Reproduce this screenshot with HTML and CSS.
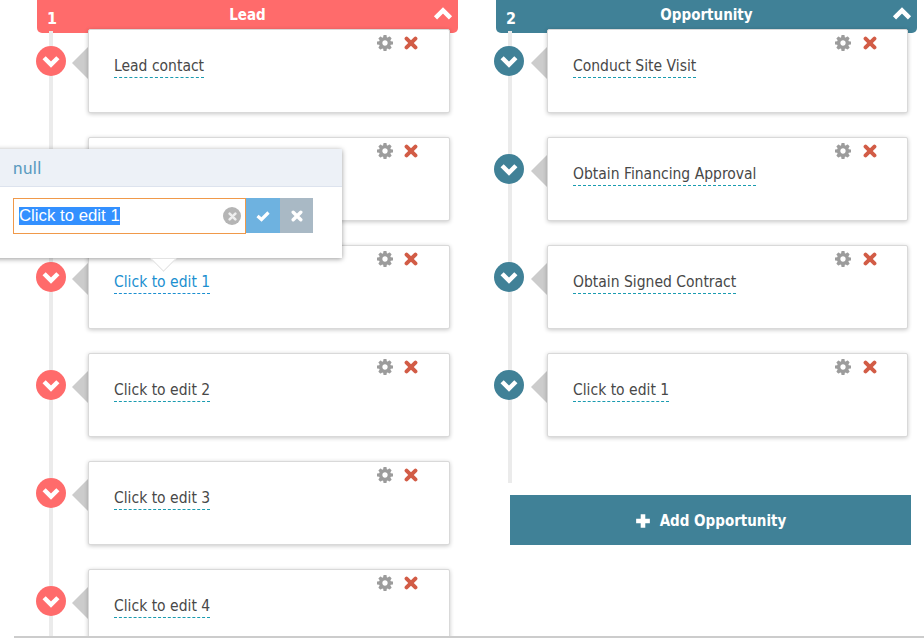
FILE: index.html
```html
<!DOCTYPE html>
<html lang="en">
<head>
<meta charset="utf-8">
<title>Stages</title>
<link rel="stylesheet" href="styles.css">
</head>
<body>
<svg class="defs" width="0" height="0" aria-hidden="true">
  <symbol id="gear" viewBox="0 -128 1536 1536"><path d="M1024 640q0-106-75-181t-181-75-181 75-75 181 75 181 181 75 181-75 75-181zm512-109v222q0 12-8 23t-20 13l-185 28q-19 54-39 91 35 50 107 138 10 12 10 25t-9 23q-27 37-99 108t-94 71q-12 0-26-9l-138-108q-44 23-91 38-16 136-29 186-7 28-36 28h-222q-14 0-24.5-8.5t-11.5-21.5l-28-184q-49-16-90-37l-141 107q-10 9-25 9-14 0-25-11-126-114-165-168-7-10-7-23 0-12 8-23 15-21 51-66.5t54-70.5q-27-50-41-99l-183-27q-13-2-21-12.5t-8-23.5v-222q0-12 8-23t19-13l186-28q14-46 39-92-40-57-107-138-10-12-10-24 0-10 9-23 26-36 98.5-107.5t94.5-71.5q13 0 26 10l138 107q44-23 91-38 16-136 29-186 7-28 36-28h222q14 0 24.5 8.5t11.5 21.5l28 184q49 16 90 37l142-107q9-9 24-9 13 0 25 10 129 119 165 170 7 8 7 22 0 12-8 23-15 21-51 66.5t-54 70.5q26 50 41 98l183 28q13 2 21 12.5t8 23.5z"/></symbol>
  <symbol id="cross" viewBox="0 0 12 12"><path d="M2.2 2.2 9.8 9.8M9.8 2.2 2.2 9.8" fill="none" stroke="currentColor" stroke-width="3.4" stroke-linecap="round"/></symbol>
  <symbol id="down" viewBox="0 0 16 12"><path d="M2.5 3 8 8.5 13.500 3" fill="none" stroke="currentColor" stroke-width="3.600"/></symbol>
  <symbol id="up" viewBox="0 0 16 12"><path d="M2 9.500 8 3.500 14 9.500" fill="none" stroke="currentColor" stroke-width="3.600"/></symbol>
  <symbol id="check" viewBox="0 0 14 12"><path d="M1.500 6 5.500 9.500 12.500 2.500" fill="none" stroke="currentColor" stroke-width="3.200"/></symbol>
  <symbol id="plus" viewBox="0 0 14 14"><path d="M7 1V13M1 7H13" fill="none" stroke="currentColor" stroke-width="4"/></symbol>
</svg>

<main class="board">
  <section class="stage stage-lead">
    <header class="stage-head">
      <span class="stage-num">1</span>
      <span class="stage-title">Lead</span>
      <svg class="stage-toggle"><use href="#up"/></svg>
    </header>
    <ol class="steps">
      <li class="step">
        <span class="dot"><svg><use href="#down"/></svg></span>
        <div class="card"><a class="label">Lead contact</a>
          <div class="tools"><svg class="gear"><use href="#gear"/></svg><svg class="cross"><use href="#cross"/></svg></div></div>
      </li>
      <li class="step">
        <span class="dot"><svg><use href="#down"/></svg></span>
        <div class="card"><a class="label">Click to edit</a>
          <div class="tools"><svg class="gear"><use href="#gear"/></svg><svg class="cross"><use href="#cross"/></svg></div></div>
      </li>
      <li class="step">
        <span class="dot"><svg><use href="#down"/></svg></span>
        <div class="card"><a class="label label-active">Click to edit 1</a>
          <div class="tools"><svg class="gear"><use href="#gear"/></svg><svg class="cross"><use href="#cross"/></svg></div></div>
      </li>
      <li class="step">
        <span class="dot"><svg><use href="#down"/></svg></span>
        <div class="card"><a class="label">Click to edit 2</a>
          <div class="tools"><svg class="gear"><use href="#gear"/></svg><svg class="cross"><use href="#cross"/></svg></div></div>
      </li>
      <li class="step">
        <span class="dot"><svg><use href="#down"/></svg></span>
        <div class="card"><a class="label">Click to edit 3</a>
          <div class="tools"><svg class="gear"><use href="#gear"/></svg><svg class="cross"><use href="#cross"/></svg></div></div>
      </li>
      <li class="step">
        <span class="dot"><svg><use href="#down"/></svg></span>
        <div class="card"><a class="label">Click to edit 4</a>
          <div class="tools"><svg class="gear"><use href="#gear"/></svg><svg class="cross"><use href="#cross"/></svg></div></div>
      </li>
    </ol>
  </section>

  <section class="stage stage-opp">
    <header class="stage-head">
      <span class="stage-num">2</span>
      <span class="stage-title">Opportunity</span>
      <svg class="stage-toggle"><use href="#up"/></svg>
    </header>
    <ol class="steps">
      <li class="step">
        <span class="dot"><svg><use href="#down"/></svg></span>
        <div class="card"><a class="label">Conduct Site Visit</a>
          <div class="tools"><svg class="gear"><use href="#gear"/></svg><svg class="cross"><use href="#cross"/></svg></div></div>
      </li>
      <li class="step">
        <span class="dot"><svg><use href="#down"/></svg></span>
        <div class="card"><a class="label">Obtain Financing Approval</a>
          <div class="tools"><svg class="gear"><use href="#gear"/></svg><svg class="cross"><use href="#cross"/></svg></div></div>
      </li>
      <li class="step">
        <span class="dot"><svg><use href="#down"/></svg></span>
        <div class="card"><a class="label">Obtain Signed Contract</a>
          <div class="tools"><svg class="gear"><use href="#gear"/></svg><svg class="cross"><use href="#cross"/></svg></div></div>
      </li>
      <li class="step">
        <span class="dot"><svg><use href="#down"/></svg></span>
        <div class="card"><a class="label">Click to edit 1</a>
          <div class="tools"><svg class="gear"><use href="#gear"/></svg><svg class="cross"><use href="#cross"/></svg></div></div>
      </li>
    </ol>
    <button class="add-btn" type="button"><svg><use href="#plus"/></svg>Add Opportunity</button>
  </section>
</main>

<div class="popover">
  <div class="pop-title">null</div>
  <div class="pop-body">
    <div class="pop-input"><span class="selected">Click to edit 1</span><span class="clear"><svg><use href="#cross"/></svg></span></div>
    <button class="pop-btn pop-ok" type="button"><svg><use href="#check"/></svg></button>
    <button class="pop-btn pop-cancel" type="button"><svg><use href="#cross"/></svg></button>
  </div>
</div>

<div class="page-edge"></div>
</body>
</html>
```
FILE: styles.css
```css
* { box-sizing: border-box; }
html, body { margin: 0; height: 638px; overflow: hidden; background: #fff; }
body { position: relative; font-family: "DejaVu Sans", "Noto Sans", sans-serif; color: #444; }
.defs { position: absolute; }

.board { display: flex; gap: 38px; padding-left: 37px; }
.stage { width: 421px; flex: none; }
.stage-lead { --accent: #ff6b6b; }
.stage-opp { --accent: #408197; }

.stage-head {
  position: relative;
  height: 33px;
  background: var(--accent);
  border-radius: 0 0 5px 5px;
  color: #fff;
  font: bold 15px/30px "DejaVu Sans Condensed", "DejaVu Sans", sans-serif;
  font-stretch: condensed;
  text-align: center;
}
.stage-num { position: absolute; left: 10px; top: 4px; font-size: 16px; line-height: 29px; }
.stage-toggle { position: absolute; right: 5px; top: 6px; width: 20px; height: 15px; }

.steps {
  position: relative;
  list-style: none;
  margin: -4px 0 0;
  padding: 0;
  display: flex;
  flex-direction: column;
  gap: 24px;
}
.steps::before {
  content: "";
  position: absolute;
  left: 12px;
  top: 2px;
  bottom: -100px;
  width: 4px;
  background: #ebebeb;
}
.stage-opp .steps::before { bottom: -46px; }

.step { position: relative; display: flex; align-items: flex-start; padding-left: 51px; }
.step::before {
  content: "";
  position: absolute;
  left: 35px;
  top: 17px;
  border: solid transparent;
  border-width: 17px 17px 17px 0;
  border-right-color: #ccc;
}
.dot {
  position: absolute;
  left: -1px;
  top: 17px;
  width: 30px;
  height: 30px;
  border-radius: 50%;
  background: var(--accent);
  color: #fff;
  display: flex;
  align-items: center;
  justify-content: center;
}
.stage-opp .dot { left: -2px; }
.dot svg { width: 20px; height: 15px; }

.card {
  position: relative;
  width: 362px;
  height: 84px;
  background: #fff;
  border: 1px solid #d9d9d9;
  border-radius: 2px;
  box-shadow: 0 1px 4px rgba(0, 0, 0, .22);
  padding: 24px 25px 0;
}
.stage-opp .card { width: 361px; }
.label {
  display: inline-block;
  height: 24px;
  font-family: "DejaVu Sans Condensed", "DejaVu Sans", sans-serif;
  font-stretch: condensed;
  font-size: 15.500px;
  line-height: 25px;
  color: #484848;
  border-bottom: 1px dashed #1a9bb0;
}
.label-active { color: #1b8fd0; border-bottom-color: #1b8fd0; }

.tools { position: absolute; right: 31px; top: 5px; display: flex; align-items: center; gap: 11px; }
.stage-opp .tools { right: 30px; gap: 12px; }
.gear { width: 16px; height: 16px; fill: #9c9c9c; }
.cross { width: 14px; height: 14px; color: #d25c46; }

.add-btn {
  display: flex;
  align-items: center;
  justify-content: center;
  gap: 9px;
  width: 401px;
  height: 50px;
  margin: 58px 0 0 14px;
  padding: 2px 0 0;
  background: #408197;
  border: 0;
  color: #fff;
  font: bold 15px "DejaVu Sans Condensed", "DejaVu Sans", sans-serif;
  font-stretch: condensed;
}
.add-btn svg { width: 16px; height: 16px; }

.popover {
  position: absolute;
  left: -10px;
  top: 149px;
  width: 352px;
  height: 109px;
  background: #fff;
  box-shadow: 0 1px 5px rgba(0, 0, 0, .4);
  z-index: 2;
}
.popover::after {
  content: "";
  position: absolute;
  left: 164px;
  top: 100px;
  width: 18px;
  height: 18px;
  background: #fff;
  border-right: 1px solid #ddd;
  border-bottom: 1px solid #ddd;
  transform: rotate(45deg);
  clip-path: polygon(100% 0, 100% 100%, 0 100%);
}
.pop-title {
  height: 38px;
  padding-left: 23px;
  background: #edf1f7;
  border-bottom: 1px solid #dde3ee;
  color: #5b9bc0;
  font: 17px/38px Lato, sans-serif;
  letter-spacing: .4px;
}
.pop-body { display: flex; align-items: flex-start; padding: 11px 0 0 23px; }
.pop-input {
  position: relative;
  width: 233px;
  height: 36px;
  padding: 8px 5px 0;
  border: 1px solid #f0994a;
  font: 16.800px/18px "Liberation Sans", Arial, sans-serif;
  color: #fff;
}
.selected { background: #3390ff; display: block; width: fit-content; height: 18px; }
.clear {
  position: absolute;
  right: 4px;
  top: 8px;
  width: 18px;
  height: 18px;
  border-radius: 50%;
  background: #b5b5b5;
  color: #eee;
  display: flex;
  align-items: center;
  justify-content: center;
}
.clear svg { width: 9px; height: 9px; }
.pop-btn {
  height: 35px;
  border: 0;
  padding: 0;
  color: #fff;
  display: flex;
  align-items: center;
  justify-content: center;
}
.pop-btn svg { width: 14px; height: 12px; }
.pop-ok { width: 34px; background: #6eb2e0; }
.pop-cancel { width: 33px; background: #a9b9c5; }

.page-edge {
  position: absolute;
  left: 14px;
  right: 0;
  bottom: 0;
  height: 2px;
  background: #ccc;
  z-index: 3;
}
```
